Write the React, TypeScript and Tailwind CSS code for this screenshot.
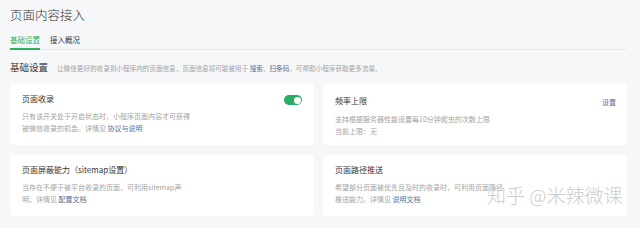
import React from "react";

const font = { fontFamily: '"Noto Sans CJK SC", "Noto Sans", sans-serif' };

function Card({ title, lines, right }: { title: string; lines: React.ReactNode[]; right?: React.ReactNode }) {
  return (
    <div className="bg-white rounded-[3px] h-[61px] pl-[12px] pr-[11px] pt-[9px] relative">
      <div className="flex items-center justify-between">
        <div className="text-[8px] leading-[12px] text-[#353535]">{title}</div>
        {right}
      </div>
      <div className="mt-[5px] text-[7px] leading-[12px] text-[#a3a3a3]">
        {lines.map((l, i) => (
          <div key={i}>{l}</div>
        ))}
      </div>
    </div>
  );
}

export default function App() {
  const link = "text-[#5a6d93]";
  return (
    <div className="w-[640px] h-[228px] bg-[#f6f7f9] overflow-hidden relative" style={font}>
      <div className="pl-[10px] pr-[13px]">
        <div className="pt-[5px] text-[12.5px] leading-[20px] text-[#353535] font-light">页面内容接入</div>
        <div className="mt-[8px] flex border-b border-[#e7e8ea] text-[7.5px] leading-[14px]">
          <div className="text-[#2bb05f] border-b-[2px] border-[#2bb05f] pb-[1px] mb-[-1px]">基础设置</div>
          <div className="ml-[10px] text-[#353535]">接入概况</div>
        </div>
        <div className="mt-[8px] flex items-end h-[16px]">
          <div className="text-[9.5px] leading-[14px] text-[#353535]">基础设置</div>
          <div className="ml-[9px] text-[6.6px] leading-[12px] text-[#a3a3a3]">
            让微信更好的收录到小程序内的页面信息，页面信息将可能被用于 <span className={link}>搜索</span>、<span className={link}>扫条码</span>，可帮助小程序获取更多流量。
          </div>
        </div>
        <div className="mt-[10px] grid grid-cols-2 gap-x-[9px] gap-y-[10px]">
          <Card
            title="页面收录"
            right={
              <div className="w-[18px] h-[10px] rounded-full bg-[#2aae67] relative mt-[2px] mr-[1px]">
                <div className="absolute right-[1.5px] top-[1.5px] w-[7px] h-[7px] rounded-full bg-white" />
              </div>
            }
            lines={[
              "只有该开关处于开启状态时，小程序页面内容才可获得",
              <>被微信收录的机会。详情见 <span className={link}>协议与说明</span></>,
            ]}
          />
          <Card
            title="频率上限"
            right={<div className="text-[7px] leading-[12px] text-[#5a6d93] mt-[3px]">设置</div>}
            lines={["支持根据服务器性能设置每10分钟爬虫的次数上限", "当前上限：无"]}
          />
          <Card
            title="页面屏蔽能力（sitemap设置）"
            lines={[
              "当存在不便于被平台收录的页面，可利用sitemap声",
              <>明，详情见 <span className={link}>配置文档</span></>,
            ]}
          />
          <Card
            title="页面路径推送"
            lines={[
              "希望部分页面被优先且及时的收录时，可利用页面路径",
              <>推送能力。详情见 <span className={link}>说明文档</span></>,
            ]}
          />
        </div>
      </div>
      <div
        className="absolute left-[487px] top-[181px] text-[19px] leading-[28px] text-[#cdcdcd] whitespace-nowrap font-light"
        style={{ textShadow: "0 0 1px #fff" }}
      >
        知乎 @米辣微课
      </div>
    </div>
  );
}
